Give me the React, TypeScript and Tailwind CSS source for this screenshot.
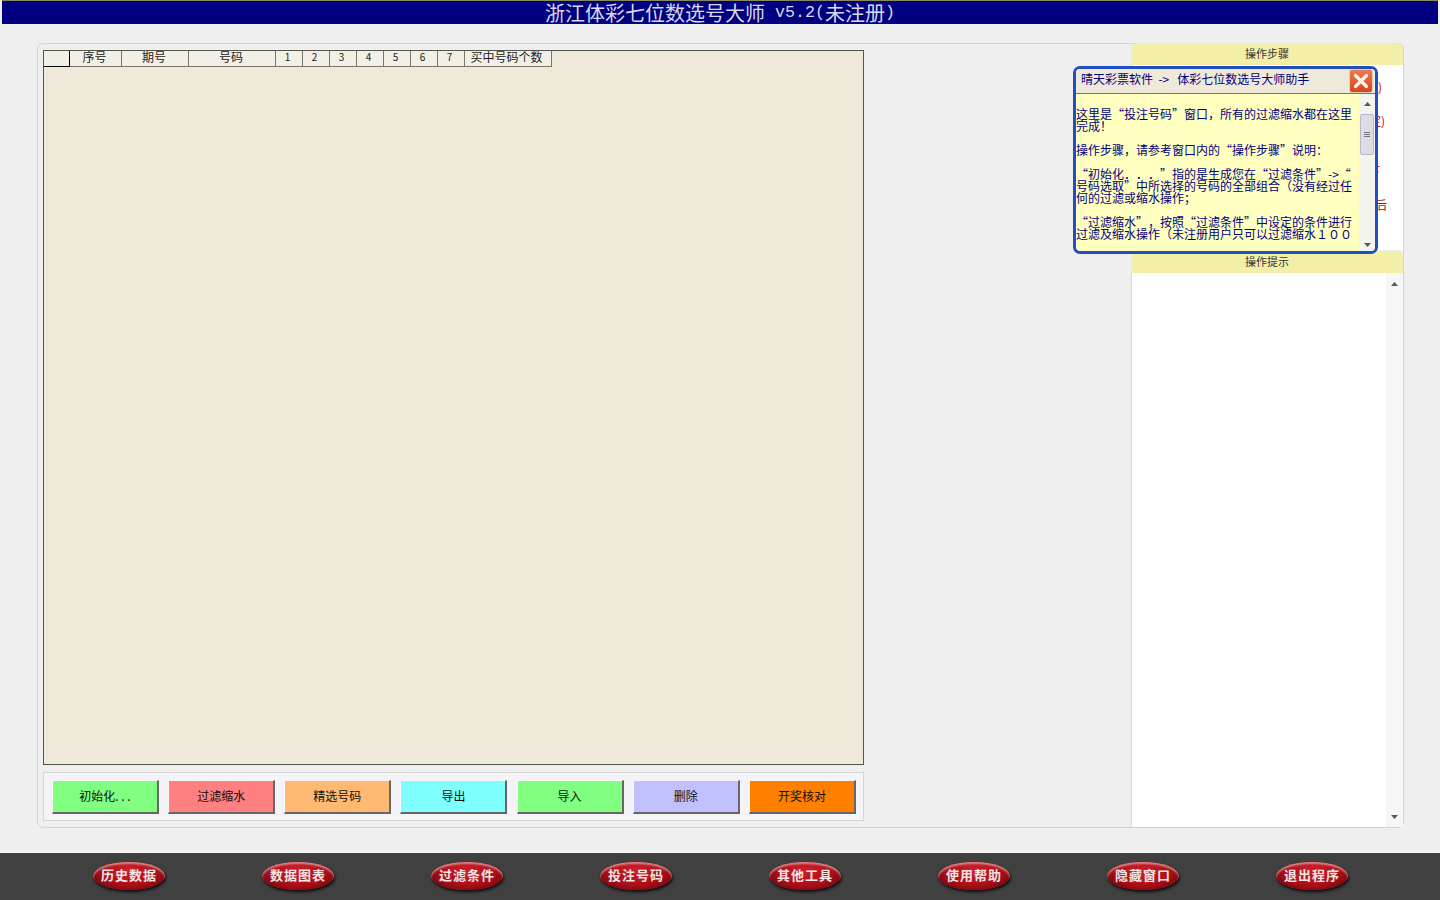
const cjk = "font-['Noto_Sans_CJK_SC','Liberation_Sans',sans-serif]"

const columns = [
  { label: "", width: "w-[26px]", text: "text-[12px]" },
  { label: "序号", width: "w-[52px]", text: "text-[12px] pr-[2px]" },
  { label: "期号", width: "w-[67px]", text: "text-[12px] pr-[2px]" },
  { label: "号码", width: "w-[87px]", text: "text-[12px] pr-[2px]" },
  { label: "1", width: "w-[27px]", text: "text-[10px] pr-[3px]" },
  { label: "2", width: "w-[27px]", text: "text-[10px] pr-[3px]" },
  { label: "3", width: "w-[27px]", text: "text-[10px] pr-[3px]" },
  { label: "4", width: "w-[27px]", text: "text-[10px] pr-[3px]" },
  { label: "5", width: "w-[27px]", text: "text-[10px] pr-[3px]" },
  { label: "6", width: "w-[27px]", text: "text-[10px] pr-[3px]" },
  { label: "7", width: "w-[27px]", text: "text-[10px] pr-[3px]" },
  { label: "买中号码个数", width: "w-[87px]", text: "text-[12px] pr-[3px]" },
]

const actions = [
  { label: "初始化. . .", color: "bg-[#80ff80]" },
  { label: "过滤缩水", color: "bg-[#ff8080]" },
  { label: "精选号码", color: "bg-[#ffb973]" },
  { label: "导出", color: "bg-[#80ffff]" },
  { label: "导入", color: "bg-[#80ff80]" },
  { label: "删除", color: "bg-[#c0c0ff]" },
  { label: "开奖核对", color: "bg-[#ff8000]" },
]

const navItems = ["历史数据", "数据图表", "过滤条件", "投注号码", "其他工具", "使用帮助", "隐藏窗口", "退出程序"]

const helpLines = [
  "这里是“投注号码”窗口，所有的过滤缩水都在这里",
  "完成！",
  "",
  "操作步骤，请参考窗口内的“操作步骤”说明：",
  "",
  "“初始化．．．”指的是生成您在“过滤条件”->“",
  "号码选取”中所选择的号码的全部组合（没有经过任",
  "何的过滤或缩水操作；",
  "",
  "“过滤缩水”，按照“过滤条件”中设定的条件进行",
  "过滤及缩水操作（未注册用户只可以过滤缩水１００",
]

function ScrollArrow({ up }: { up: boolean }) {
  return (
    <svg width="7" height="4" viewBox="0 0 7 4" className="shrink-0">
      <path d={up ? "M3.5 0 L7 4 L0 4 Z" : "M0 0 L7 0 L3.5 4 Z"} fill="#55585f" />
    </svg>
  )
}

function PanelHeader({ title }: { title: string }) {
  return (
    <div className="h-[22px] flex items-center justify-center pb-[1px] bg-[#f3efa9] rounded-t-[6px] text-[11px] text-[#333]">
      {title}
    </div>
  )
}

export default function App() {
  return (
    <div className={`relative w-[1440px] h-[900px] overflow-hidden flex flex-col bg-[#efefef] ${cjk}`}>
      {/* Title bar */}
      <div className="h-[24px] mx-[2px] shrink-0 flex items-center justify-center bg-[#000080] border-t border-[#8a8a60] text-[20px] leading-[22px] text-[#d8d8e8] whitespace-pre">
        浙江体彩七位数选号大师<span className="font-['Liberation_Mono',monospace] text-[16.67px]"> v5.2(</span>未注册<span className="font-['Liberation_Mono',monospace] text-[16.67px]">)</span>
      </div>

      {/* Main panel */}
      <div className="flex-1 pt-[19px] pl-[37px]">
        <div className="w-[1367px] h-[785px] flex border border-[#d4d4d4] rounded-[6px] bg-[#efefef]">
          {/* Left column */}
          <div className="w-[826px] pl-[5px] pt-[6px] flex flex-col gap-[7px]">
            <div className="h-[715px] bg-[#efe9d9] border border-[#55554a]">
              <div className="flex h-[16px]">
                {columns.map((col, i) => (
                  <div
                    key={i}
                    className={`${col.width} ${col.text} flex items-center justify-center pb-[4px] border-r border-b border-[#77776c] leading-none text-[#222] bg-[#f2f0e6] ${i === 0 ? "border-b-black border-r-black" : ""}`}
                  >
                    {col.label}
                  </div>
                ))}
              </div>
            </div>
            <div className="h-[49px] flex items-center justify-between pl-[8px] pr-[7px] border border-[#d6d6d6] bg-[#f4f4f8]">
              {actions.map((btn) => (
                <div
                  key={btn.label}
                  className={`w-[107px] h-[34px] flex items-center justify-center pb-[1px] text-[12px] text-[#111] border-r-2 border-b-2 border-r-[#666] border-b-[#666] border-t border-l border-t-[#f8f8f8] border-l-[#f8f8f8] ${btn.color}`}
                >
                  {btn.label}
                </div>
              ))}
            </div>
          </div>

          {/* Right column */}
          <div className="ml-[267px] w-[272px] -mt-px flex flex-col">
            <PanelHeader title="操作步骤" />
            <div className="h-[185px] bg-white border-l border-[#d8d8d8] pl-[243px] pt-[14px] text-[12px] leading-[16px] text-[#c00000] whitespace-nowrap overflow-hidden">
              <div className="h-[34px] ml-[3px]">)</div>
              <div className="h-[50px] -ml-[6px]">定)</div>
              <div className="h-[34px] -ml-[7px]">下</div>
              <div>后</div>
            </div>
            <div className="h-[1px]" />
            <PanelHeader title="操作提示" />
            <div className="flex-1 flex bg-white border-l border-[#d8d8d8]">
              <div className="flex-1" />
              <div className="w-[17px] flex flex-col items-center justify-between pt-[9px] pb-[8px] bg-[#f6f6f6]">
                <ScrollArrow up />
                <ScrollArrow up={false} />
              </div>
            </div>
          </div>
        </div>
      </div>

      {/* Bottom nav */}
      <div className="h-[48px] shrink-0 flex items-center gap-[97px] pl-[93px] pb-[1px] bg-[#404040] border-t border-[#f8f8f8]">
        {navItems.map((item) => (
          <div
            key={item}
            className="w-[72px] h-[28px] flex items-center justify-center pb-[2px] rounded-[50%] bg-[radial-gradient(ellipse_at_50%_30%,#cf1f28_0%,#a80f18_55%,#5c0006_100%)] shadow-[inset_0_2px_2px_rgba(255,220,220,0.55),1px_2px_3px_rgba(0,0,0,0.8)] text-[13px] font-bold tracking-[1px] text-[#f4e4e4]"
          >
            {item}
          </div>
        ))}
      </div>

      {/* Assistant popup */}
      <div className="absolute left-[1073px] top-[66px] w-[305px] h-[188px] flex flex-col border-[3px] border-[#1f4fc0] rounded-[7px] bg-[#ffffc0] overflow-hidden">
        <div className="h-[25px] shrink-0 flex items-start justify-between pl-[5px] bg-[#efe9d9] border-b border-[#77776c]">
          <span className="text-[12px] leading-[20px] text-[#000080] whitespace-pre">晴天彩票软件  -&gt;   体彩七位数选号大师助手</span>
          <div className="w-[24px] h-[24px] mr-[2px] flex items-center justify-center rounded-[3px] bg-gradient-to-b from-[#ee7a4a] to-[#d8431c] border border-[#d8d0b8]">
            <svg width="16" height="16" viewBox="0 0 16 16">
              <path d="M2.5 2.5 L13.5 13.5 M13.5 2.5 L2.5 13.5" stroke="#fff4e8" strokeWidth="3.2" strokeLinecap="round" />
            </svg>
          </div>
        </div>
        <div className="flex-1 flex min-h-0">
          <div className="flex-1 pt-[14px] text-[12px] leading-[12px] text-[#000080] whitespace-pre overflow-hidden [text-spacing-trim:space-all]">
            {helpLines.map((line, i) => (
              <div key={i} className="h-[12px]">{line}</div>
            ))}
          </div>
          <div className="w-[16px] flex flex-col items-center bg-[#f4f4ee] pt-[8px] pb-[4px]">
            <ScrollArrow up />
            <div className="w-[14px] h-[41px] mt-[8px] flex flex-col items-center justify-center gap-[1px] bg-[#dcdce4] border border-[#b8b8c8] rounded-[2px]">
              <div className="w-[6px] h-px bg-[#777]" />
              <div className="w-[6px] h-px bg-[#777]" />
              <div className="w-[6px] h-px bg-[#777]" />
            </div>
            <div className="flex-1" />
            <ScrollArrow up={false} />
          </div>
        </div>
      </div>
    </div>
  )
}
